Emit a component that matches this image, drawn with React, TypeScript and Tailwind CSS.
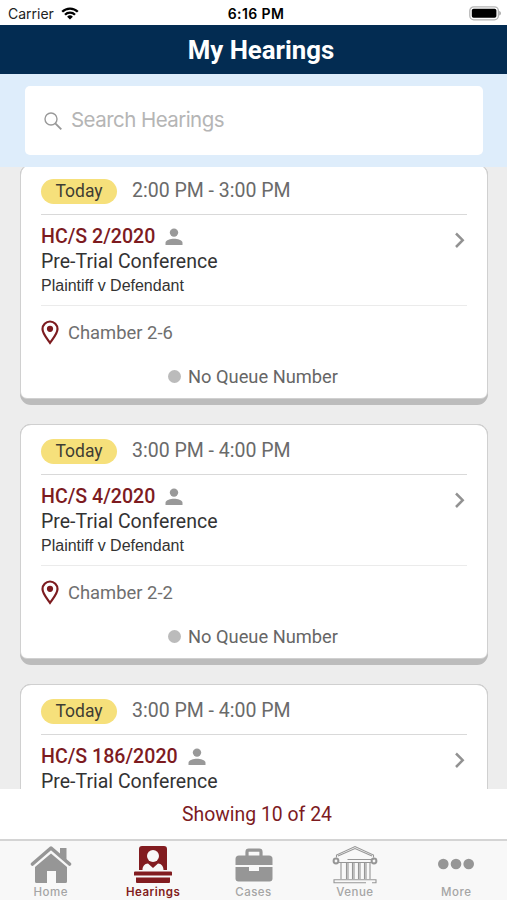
import type { ReactNode } from 'react';

interface Hearing {
  caseNumber: string;
  time: string;
  type: string;
  parties: string;
  venue: string;
}

const hearings: Hearing[] = [
  {
    caseNumber: 'HC/S 2/2020',
    time: '2:00 PM - 3:00 PM',
    type: 'Pre-Trial Conference',
    parties: 'Plaintiff v Defendant',
    venue: 'Chamber 2-6',
  },
  {
    caseNumber: 'HC/S 4/2020',
    time: '3:00 PM - 4:00 PM',
    type: 'Pre-Trial Conference',
    parties: 'Plaintiff v Defendant',
    venue: 'Chamber 2-2',
  },
  {
    caseNumber: 'HC/S 186/2020',
    time: '3:00 PM - 4:00 PM',
    type: 'Pre-Trial Conference',
    parties: 'Plaintiff v Defendant',
    venue: 'Chamber 2-2',
  },
];

function StatusBar() {
  return (
    <div className="grid h-[25px] shrink-0 grid-cols-3 items-center bg-white pl-[8px] pr-[6px] pt-[2px] font-['Inter',sans-serif] text-black">
      <div className="flex items-center gap-[7px]">
        <span className="text-[14px] leading-none text-[#222]">Carrier</span>
        <svg width="18" height="13" viewBox="0 0 18 13" fill="none" stroke="#000" strokeWidth="2.3">
          <path d="M1.2 4.8a11 11 0 0 1 15.6 0" />
          <path d="M4 7.8a7 7 0 0 1 10 0" />
          <path d="M9 12.6 6.1 9.7a4.1 4.1 0 0 1 5.8 0Z" fill="#000" stroke="none" />
        </svg>
      </div>
      <span className="pl-[3px] text-center text-[14px] leading-none font-semibold tracking-[0.4px]">6:16 PM</span>
      <svg className="justify-self-end" width="33" height="15" viewBox="0 0 33 15">
        <rect x="1.8" y="0.8" width="28.6" height="13" rx="4" fill="#fff" stroke="#b5b5b5" strokeWidth="1.3" />
        <rect x="3.8" y="2.8" width="24.6" height="9" rx="1.8" fill="#000" />
        <path d="M31.5 5v4.6c1.5-.6 1.5-4 0-4.6Z" fill="#777" />
      </svg>
    </div>
  );
}

function HearingCard({ hearing }: { hearing: Hearing }) {
  return (
    <article className="h-[241px] shrink-0 rounded-[11px] bg-[#bcbcbc] pb-[6px]">
      <div className="flex h-[235px] flex-col rounded-t-[11px] rounded-b-[7px] border border-[#d0d0d0] bg-white px-5">
        <div className="flex h-[50px] shrink-0 items-center gap-[15px] border-b border-[#d9d9d9] pt-[3px]">
          <span className="flex h-[25px] w-[76px] items-center justify-center rounded-full bg-[#f6e07b] text-[17.5px] text-[#3f3d33]">
            Today
          </span>
          <span className="text-[19.5px] text-[#6a6a6a]">{hearing.time}</span>
        </div>

        <div className="flex h-[91px] shrink-0 justify-between border-b border-[#ebebeb]">
          <div className="pt-[10px]">
            <div className="flex h-6 items-center gap-[10px]">
              <span className="text-[19.6px] font-medium text-[#7d1b1f]">{hearing.caseNumber}</span>
              <svg width="18" height="18" viewBox="0 0 18 18" fill="#999">
                <circle cx="9" cy="4.6" r="4.2" />
                <path d="M.5 17v-2.2C.5 12 5.8 10.8 9 10.8s8.500 1.200 8.500 4V17Z" />
              </svg>
            </div>
            <div className="h-6 text-[19.5px] leading-[25px] text-[#333]">{hearing.type}</div>
            <div className="h-[26px] font-['Liberation_Sans',sans-serif] text-[16px] leading-[26px] text-[#333]">
              {hearing.parties}
            </div>
          </div>
          <svg className="mt-[17px]" width="14" height="16" viewBox="0 0 14 16" fill="none" stroke="#929292" strokeWidth="2.5">
            <path d="m3 1.500 6.700 6.700L3 15" />
          </svg>
        </div>

        <div className="flex h-[53px] shrink-0 items-center gap-[9px]">
          <svg width="18" height="25" viewBox="0 0 18 25" fill="none" stroke="#7d1b1f" strokeWidth="2.2">
            <path d="M9 22.800C5.500 18 1.500 13.500 1.500 9a7.500 7.500 0 0 1 15 0c0 4.500-4 9-7.500 13.800Z" />
            <circle cx="9" cy="8.800" r="3.100" fill="#7d1b1f" stroke="none" />
          </svg>
          <span className="text-[18.4px] text-[#6f6f6f]">{hearing.venue}</span>
        </div>

        <div className="flex h-9 shrink-0 items-center justify-center gap-[7px] pr-[2px]">
          <span className="-mt-[2px] size-[13px] rounded-full bg-[#bbb]" />
          <span className="text-[18.3px] text-[#666]">No Queue Number</span>
        </div>
      </div>
    </article>
  );
}

function Tab({ label, active, children }: { label: string; active?: boolean; children: ReactNode }) {
  return (
    <button className={`flex flex-1 flex-col items-center pt-1 ${active ? 'text-[#821c20]' : 'text-[#969696]'}`}>
      <span className="flex h-[39px] items-center justify-center">{children}</span>
      <span
        className={`mt-[2px] font-['Inter',sans-serif] text-[11.5px] leading-[13px] tracking-[0.5px] ${
          active ? 'pl-[2px] font-semibold' : 'font-medium text-[#a5a5a5]'
        }`}
      >
        {label}
      </span>
    </button>
  );
}

function TabBar() {
  return (
    <nav className="flex h-[61px] shrink-0 border-t-2 border-[#d4d4d4] bg-[#f8f8f8]">
      <Tab label="Home">
        <svg width="42" height="39" viewBox="0 0 42 39" fill="currentColor">
          <path d="M30 3h6.500v12.500L30 10Z" />
          <path d="M2.500 19 21 3l18.500 16" fill="none" stroke="currentColor" strokeWidth="3.600" strokeLinecap="round" strokeLinejoin="round" />
          <path d="M5 22 21 8.500 37 22v14.500q0 1.500-1.500 1.500H26V26h-9v12H6.500Q5 38 5 36.500Z" />
        </svg>
      </Tab>
      <Tab label="Hearings" active>
        <svg className="ml-[2px]" width="38" height="39" viewBox="0 0 38 39" fill="currentColor">
          <path d="M5 25V4q0-3 3-3h22q3 0 3 3v21h-3.500c0-3.500-2-6.500-5.500-6.500L19 23l-5-4.500C10.500 18.500 8.500 21.500 8.500 25Z" />
          <circle cx="19" cy="11" r="6" fill="#f8f8f8" />
          <path d="M1 26.500h36q1 0 1 1v3H0v-3q0-1 1-1ZM2 32.500h34V37q0 1-1 1H3q-1 0-1-1Z" />
        </svg>
      </Tab>
      <Tab label="Cases">
        <svg width="38" height="34" viewBox="0 0 38 34" fill="currentColor">
          <path d="M12 9V4q0-1.800 1.800-1.800h10.400Q26 2.200 26 4v5" fill="none" stroke="currentColor" strokeWidth="3.200" />
          <path d="M4 7.500h30q3.500 0 3.500 3.500v6H.5v-6Q.5 7.500 4 7.500Z" />
          <path d="M.5 19H14v4h10v-4h13.500v11.500q0 3-3 3h-31q-3 0-3-3Z" />
        </svg>
      </Tab>
      <Tab label="Venue">
        <svg width="46" height="39" viewBox="0 0 46 39" fill="none" stroke="currentColor" strokeWidth="1.100">
          <path d="M4.500 12.500V10L23 1.500 41.500 10v2.500M6 11 23 3.500 40 11M15.500 14.500h26" />
          <circle cx="4" cy="16" r="2.400" strokeWidth="2" />
          <circle cx="42" cy="16" r="2.400" strokeWidth="2" />
          <path d="M7 17.500h32M9 18v16M14.500 18v16M16 18v16M20.500 18v16M22 18v16M26.500 18v16M28 18v16M32.500 18v16M34 18v16M38 18v16" />
          <path d="M34 37.800H2v-3h42v3h-4" />
        </svg>
      </Tab>
      <Tab label="More">
        <svg className="-mt-[2px]" width="38" height="12" viewBox="0 0 38 12" fill="currentColor">
          <circle cx="6.300" cy="6" r="5.300" />
          <circle cx="19" cy="6" r="5.300" />
          <circle cx="31.700" cy="6" r="5.300" />
        </svg>
      </Tab>
    </nav>
  );
}

export default function App() {
  return (
    <div className="flex h-[900px] w-[507px] flex-col overflow-hidden bg-[#ededed] font-['Roboto',sans-serif]">
      <StatusBar />

      {/* Header */}
      <header className="flex h-[49px] shrink-0 items-center justify-center bg-[#032c52] pl-[15px] pt-[2px]">
        <h1 className="text-[25.8px] font-bold text-white">My Hearings</h1>
      </header>

      {/* Search */}
      <div className="h-[93px] shrink-0 bg-[#deedfb] pl-[25px] pr-6 pt-3">
        <div className="flex h-[69px] items-center gap-[9px] rounded-[5px] bg-white pl-[19px]">
          <svg width="18" height="18" viewBox="0 0 18 18" fill="none" stroke="#999" strokeWidth="1.400">
            <circle cx="7" cy="7" r="6" />
            <path d="m11.300 11.300 6 6" strokeWidth="1.900" />
          </svg>
          <span className="font-['Inter',sans-serif] text-[20.5px] tracking-[-0.55px] text-[#b5b5b5]">
            Search Hearings
          </span>
        </div>
      </div>

      {/* Hearing list */}
      <main className="flex min-h-0 flex-1 flex-col overflow-hidden pl-5 pr-[19px]">
        <div className="-mt-[3px] flex flex-col gap-[19px]">
          {hearings.map((hearing) => (
            <HearingCard key={hearing.caseNumber} hearing={hearing} />
          ))}
        </div>
      </main>

      <div className="flex h-[50px] shrink-0 items-center justify-center bg-white pl-[7px] pt-[2px] text-[19.4px] text-[#7d1b1f]">
        Showing 10 of 24
      </div>
      <TabBar />
    </div>
  );
}
